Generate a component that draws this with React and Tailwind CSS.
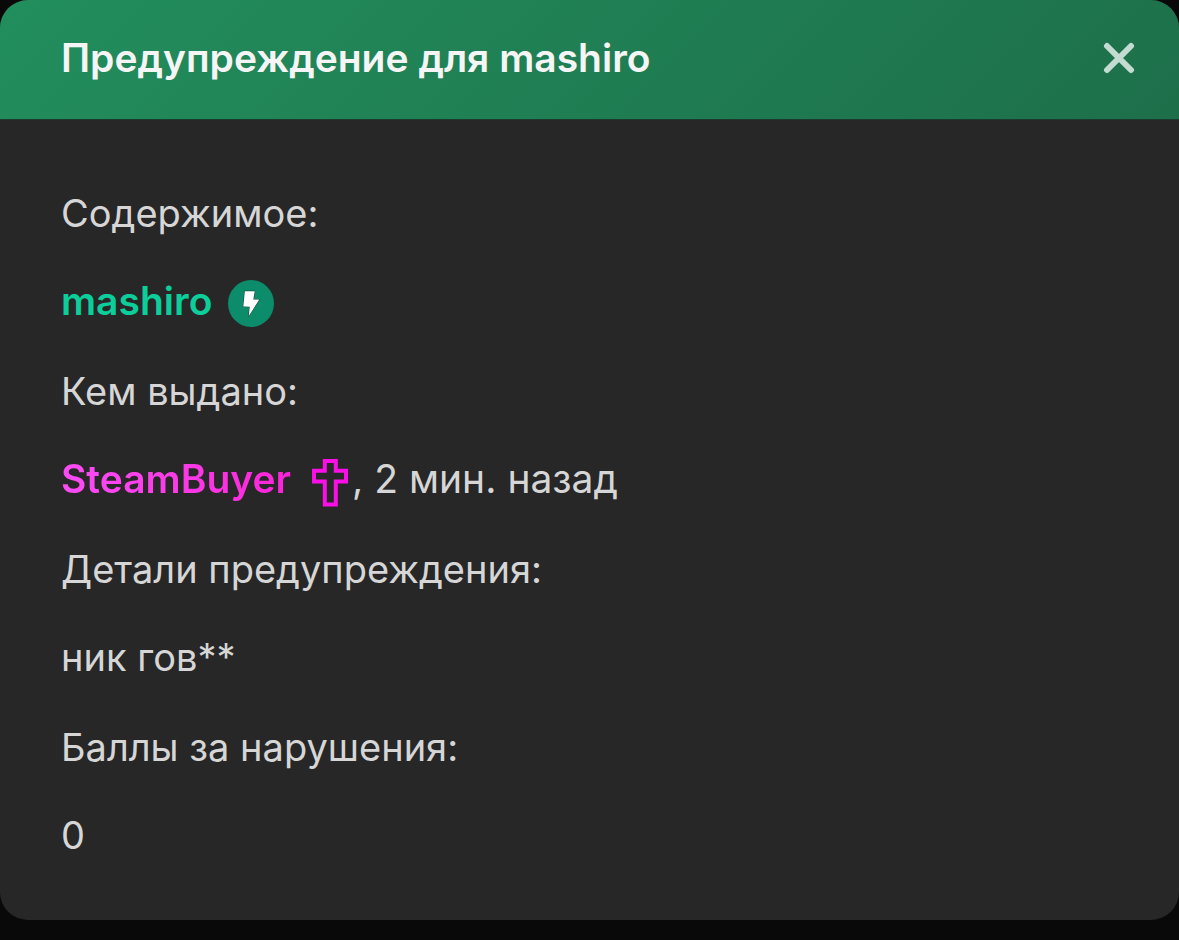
import React from 'react'

export default function App() {
  return (
    <div className="min-h-screen bg-[#090909] pb-5 font-['Inter',sans-serif] text-[#d6d6d6]">
      <section role="dialog" aria-labelledby="warning-title" className="overflow-hidden rounded-[28px] bg-[#272727]">
        <header className="flex items-center justify-between border-b border-[#1b3a2b] bg-[linear-gradient(135deg,#228e5d,#1d6f4a)] pt-[34px] pr-10 pb-[37px] pl-[61px]">
          <h1 id="warning-title" className="text-[39px] leading-[48px] font-semibold text-[#f5f5f5]">Предупреждение для mashiro</h1>
          <button type="button" aria-label="Закрыть" className="p-1 text-[#c3dbd0]">
            <svg viewBox="0 0 32 32" className="size-8" fill="none" stroke="currentColor" strokeWidth="6" strokeLinecap="round">
              <path d="M4 4 28 28M28 4 4 28" />
            </svg>
          </button>
        </header>
        <dl className="px-[61px] pt-[69px] pb-[61px] text-[38px] leading-[48px]">
          <Row label="Содержимое:">
            <a href="#mashiro" className="text-[39px] font-semibold text-[#0cce9b]">mashiro</a>
            <BoltBadge />
          </Row>
          <Row label="Кем выдано:">
            <a href="#steambuyer" className="bg-linear-to-r from-[#fb4cf6] to-[#fb22d9] bg-clip-text text-[39px] font-semibold text-transparent">SteamBuyer</a>
            <Cross />
            <span className="ml-1 text-[39px]">, 2 мин. назад</span>
          </Row>
          <Row label="Детали предупреждения:">ник гов**</Row>
          <Row label="Баллы за нарушения:">0</Row>
        </dl>
      </section>
    </div>
  )
}

function Row({ label, children }) {
  return (
    <div className="mb-[42px] last:mb-0">
      <dt>{label}</dt>
      <dd className="mt-10 flex h-12 items-center">{children}</dd>
    </div>
  )
}

function BoltBadge() {
  return (
    <svg viewBox="0 0 46 47" className="mt-1 ml-4 h-[47px] w-[46px]">
      <ellipse cx="23" cy="23.5" rx="23" ry="23.5" fill="#0d8c6c" />
      <path d="M16.8 11.2h10l-1.5 8.3h6L20.7 36.2l1-9.4-6.4-.3z" fill="#fff" stroke="#14382e" strokeWidth="1" paintOrder="stroke" />
    </svg>
  )
}

function Cross() {
  return (
    <svg viewBox="0 0 36 48" className="mt-2 ml-[21px] h-12 w-9" fill="none" stroke="#fb0fe6" strokeWidth="4">
      <path d="M12.8 2h11v9.7H34v10.8H23.8v23H12.8v-23H2V11.7h10.8z" />
    </svg>
  )
}
